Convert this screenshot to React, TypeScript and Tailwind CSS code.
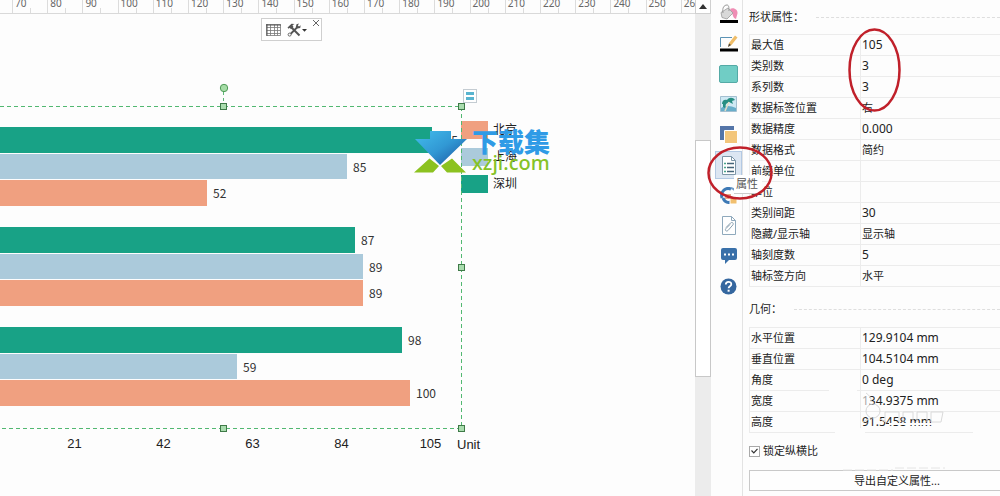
import React from "react";

const SANS = "font-['Noto_Sans','Noto_Sans_CJK_SC',sans-serif]";

const rulerMarks = [70, 80, 90, 100, 110, 120, 130, 140, 150, 160, 170, 180, 190, 200, 210, 220, 230, 240, 250, 260];

type Bar = { value: number; width: number; color: string };
const GREEN = "bg-[#18a286]";
const BLUE = "bg-[#abcadb]";
const ORANGE = "bg-[#f0a080]";
const groups: Bar[][] = [
  [
    { value: 105, width: 432, color: GREEN },
    { value: 85, width: 347, color: BLUE },
    { value: 52, width: 207, color: ORANGE },
  ],
  [
    { value: 87, width: 355, color: GREEN },
    { value: 89, width: 363, color: BLUE },
    { value: 89, width: 363, color: ORANGE },
  ],
  [
    { value: 98, width: 402, color: GREEN },
    { value: 59, width: 237, color: BLUE },
    { value: 100, width: 410, color: ORANGE },
  ],
];

const legend = [
  { name: "北京", color: ORANGE },
  { name: "上海", color: BLUE },
  { name: "深圳", color: GREEN },
];

const shapeRows: [string, string][] = [
  ["最大值", "105"],
  ["类别数", "3"],
  ["系列数", "3"],
  ["数据标签位置", "右"],
  ["数据精度", "0.000"],
  ["数据格式", "简约"],
  ["前缀单位", ""],
  ["单位", ""],
  ["类别间距", "30"],
  ["隐藏/显示轴", "显示轴"],
  ["轴刻度数", "5"],
  ["轴标签方向", "水平"],
];

const geometryRows: [string, string][] = [
  ["水平位置", "129.9104 mm"],
  ["垂直位置", "104.5104 mm"],
  ["角度", "0 deg"],
  ["宽度", "134.9375 mm"],
  ["高度", "91.5458 mm"],
];

function Ruler() {
  return (
    <div className="h-[14px] shrink-0 overflow-hidden border-b border-[#d9d9d9] bg-[#fdfdfd] pl-3">
      <div className="grid h-full w-[704px] grid-cols-20">
        {rulerMarks.map((m) => (
          <div key={m} className="relative flex border-l border-[#dcdcdc]">
            <span className="-mt-[3px] pl-[2px] text-[10px] leading-3 text-[#666]">{m}</span>
            <span className="absolute bottom-0 left-1/2 h-[5px] w-px bg-[#dcdcdc]" />
          </div>
        ))}
      </div>
    </div>
  );
}

function Handle({ className }: { className: string }) {
  return <span className={`absolute size-[7px] border border-[#3f7a48] bg-[#a9dcae] ${className}`} />;
}

function Selection() {
  return (
    <div className="pointer-events-none absolute top-[92px] left-0 h-[323px] w-[462px]">
      <svg className="absolute inset-0 size-full" aria-hidden="true">
        <path
          d="M0 .5H461M461.500 1V322M461 322.500H0"
          fill="none"
          stroke="#52b871"
          strokeDasharray="4 3"
        />
      </svg>
      <svg className="absolute -top-[23px] left-[219px] h-[22px] w-[10px]" viewBox="0 0 10 22" aria-hidden="true">
        <path d="M4.500 9V22" stroke="#5fb877" strokeDasharray="3 3" />
        <circle cx="5" cy="5" r="3.700" fill="#a5dca6" stroke="#4f9a57" />
      </svg>
      <Handle className="-top-[3px] left-[220px]" />
      <Handle className="-top-[3px] -right-[3px]" />
      <Handle className="top-[158px] -right-[3px]" />
      <Handle className="-bottom-[3px] left-[220px]" />
      <Handle className="-right-[3px] -bottom-[3px]" />
    </div>
  );
}

function FloatingTools() {
  return (
    <div className="absolute top-1 left-[261px] flex h-[23px] w-[61px] items-center border border-[#cfcfcf] bg-white pl-1">
      <button type="button" aria-label="数据表">
        <svg width="15" height="12" viewBox="0 0 15 12" fill="none" stroke="#777">
          <path d="M.5 .5h14v11H.5zM.5 3.500h14M.5 6.500h14M.5 9.500h14M4.500 .5v11M8.500 .5v11M11.500 .5v11" strokeWidth=".8" />
          <path d="M0 1h15M1 0v12" stroke="#555" />
        </svg>
      </button>
      <button type="button" aria-label="工具" className="ml-1.5">
        <svg width="22" height="14" viewBox="0 0 22 14">
          <path d="M4 4 12.500 12.500" stroke="#555" strokeWidth="2" />
          <path d="M.5 4.500 4.500 .8 7.500 1 5.500 2.200 6.500 4 4 6.200 2.800 4.800 1.600 5.800z" fill="#555" />
          <path d="M10.500 4 3 11.500" stroke="#555" strokeWidth="1.800" />
          <path d="M9.500 1.200 12 .6 10.800 2.600 12 3.600 13.700 2.200 13.200 5 10.500 5.600 8.800 4z" fill="#555" />
          <circle cx="2.600" cy="11.600" r="1.500" fill="white" stroke="#666" />
          <path d="M15 6h5l-2.500 2.800z" fill="#333" />
        </svg>
      </button>
      <button type="button" aria-label="关闭" className="absolute top-0 right-px">
        <svg width="8" height="8" viewBox="0 0 8 8" stroke="#666">
          <path d="M1 1l6 6M7 1l-6 6" />
        </svg>
      </button>
    </div>
  );
}

function Watermark() {
  return (
    <div className="absolute top-[111px] left-[413px] flex">
      <svg width="54" height="50" viewBox="0 0 54 50" aria-hidden="true">
        <defs>
          <linearGradient id="arrow" x1="0" y1="0" x2="1" y2="1">
            <stop offset="0" stopColor="#43bdec" />
            <stop offset=".5" stopColor="#3198d4" />
            <stop offset="1" stopColor="#1a4f9c" />
          </linearGradient>
        </defs>
        <path d="M17 6H38V14H54L27 40 2 14H17z" fill="url(#arrow)" />
        <path d="M16.500 33.500 26 41 20 47.500H1zM39 33.500 53 47.500H34L28 41z" fill="#8cc220" />
      </svg>
      <div className="pt-1 pl-[5px]">
        <div className="text-[26px] leading-[26px] font-black text-[#2f9be6]">下载集</div>
        <div className="text-[20px] leading-4 font-medium text-[#85c226]">xzji.com</div>
      </div>
    </div>
  );
}

function Chart() {
  return (
    <main className="relative min-w-0 flex-1 overflow-hidden">
      <section className="flex pt-[113px]" aria-label="图表">
        <div className="w-[461px] shrink-0">
          <div className="flex flex-col gap-[21px]">
            {groups.map((bars, i) => (
              <div key={i} className="flex h-[79px] flex-col gap-px">
                {bars.map((b, j) => (
                  <div key={j} className="flex min-h-0 flex-1 items-center gap-1.5">
                    <div className={`h-full shrink-0 ${b.color}`} style={{ width: b.width }} />
                    <span className="font-['Noto_Sans_CJK_SC',sans-serif] text-xs leading-4 text-[#333]">{b.value}</span>
                  </div>
                ))}
              </div>
            ))}
          </div>
        </div>
        <ul className="-mt-1.5 flex flex-col gap-[9px]">
          {legend.map((l) => (
            <li key={l.name} className="flex h-[18px] items-center gap-[5px]">
              <span className={`h-[18px] w-[27px] ${l.color}`} />
              <span className="text-xs leading-[18px] text-[#222]">{l.name}</span>
            </li>
          ))}
        </ul>
      </section>
      <div className="mt-[30px] flex pl-[30px] font-['Liberation_Sans',sans-serif] text-[13px] leading-4 text-[#222]">
        {[21, 42, 63, 84, 105].map((t) => (
          <span key={t} className="w-[89px] text-center">{t}</span>
        ))}
        <span className="-ml-[18px] pt-px">Unit</span>
      </div>
      <Selection />
      <button type="button" aria-label="选项" className="absolute top-[75px] left-[463px] grid h-[14px] w-[14px] place-items-center border border-[#c4ccd2] bg-white">
        <svg width="8" height="8" viewBox="0 0 8 8">
          <path d="M0 1.500h8M0 6.500h8" stroke="#58b4cf" strokeWidth="3" />
        </svg>
      </button>
      <FloatingTools />
      <Watermark />
    </main>
  );
}

function Rail() {
  return (
    <nav className="w-8 shrink-0 border-r border-[#e3e3e3] bg-[#fdfdfd]">
      <div className="-mt-0.5 ml-1 grid h-[304px] grid-rows-10 place-items-center">
        <button type="button" aria-label="填充">
          <svg width="18" height="19" viewBox="0 0 18 19">
            <path d="M10 5c4-2 8 1 7.500 4.500L16 15c-3-1-3-4-4-6z" fill="#ef8db4" />
            <path d="M1 8.500 8 4l5 5-6 6-5-1.500z" fill="#d9d9d9" stroke="#9a9a9a" strokeWidth=".8" />
            <path d="M3 9c-1-5 1-8 4-8 2 0 2 3 2 6" fill="none" stroke="#999" />
            <path d="M0 16h18v3H0z" fill="#000" />
          </svg>
        </button>
        <button type="button" aria-label="线条">
          <svg width="18" height="17" viewBox="0 0 18 17">
            <path d="M.5 12V2.500H12" fill="none" stroke="#5b93b5" />
            <path d="M8 12l1-4 6-7.500 2.500 2L11.500 10z" fill="#efbd68" />
            <path d="M8 12l1-3.500 2 1.500z" fill="#444" />
            <path d="M0 13.500h18v3H0z" fill="#000" />
          </svg>
        </button>
        <button type="button" aria-label="主题颜色" className="h-[18px] w-[19px] rounded-xs border border-[#54aaa6] bg-[#70cdc5]" />
        <button type="button" aria-label="图片">
          <svg width="17" height="16" viewBox="0 0 17 16">
            <path d="M.5.5h16v15H.5z" fill="#cfe9f4" stroke="#a3bfd0" />
            <path d="M1 12c5-3 10-2 15 0v3H1z" fill="#68aeca" />
            <path d="M2 8c0-4 3-5 5-4 2-3 6-3 8 0l-3 1 1 3-4-2-3 2-1 4-2-1 0-3z" fill="#278e82" />
            <path d="M9 6l-4 9" stroke="#e5ddc3" strokeWidth="1.500" />
          </svg>
        </button>
        <button type="button" aria-label="图层">
          <svg width="18" height="18" viewBox="0 0 18 18">
            <path d="M0 0h14v14H0z" fill="#5475a8" />
            <path d="M4.500 4.500h13v13h-13z" fill="#f3c67b" stroke="#fff" />
          </svg>
        </button>
        <button type="button" aria-label="属性" className="flex h-[28px] w-[27px] items-center justify-center border border-[#b3c9e3] bg-[#dce6f2]">
          <svg width="14" height="19" viewBox="0 0 14 19">
            <path d="M.5.5h9l4 4v14H.5z" fill="#fff" stroke="#7d96a8" />
            <path d="M9.500.5v4h4" fill="none" stroke="#7d96a8" />
            <path d="M5 7.500h7M5 11.500h7M5 15.500h7" stroke="#456579" strokeWidth="1.500" />
            <path d="M2 7.500h2M2 11.500h2M2 15.500h2" stroke="#4aa78c" strokeWidth="1.500" />
          </svg>
        </button>
        <button type="button" aria-label="超链接">
          <svg width="18" height="18" viewBox="0 0 18 18">
            <path d="M2 11C0 4 6 0 11 2" fill="none" stroke="#3d79b5" strokeWidth="3" />
            <path d="M3 11c2 5 5 5 8 4" fill="none" stroke="#3d79b5" strokeWidth="3" />
            <path d="M11 1c4 1 5 4 5 6" fill="none" stroke="#6f9cc9" strokeWidth="2" />
            <path d="M5 7h6v5H5z" fill="#e9a88a" />
            <path d="M10 10h7v7h-7z" fill="#f1bf6f" stroke="#fff" />
          </svg>
        </button>
        <button type="button" aria-label="附件">
          <svg width="14" height="19" viewBox="0 0 14 19" fill="none">
            <path d="M.5.5h9l4 4v14H.5z" fill="#fff" stroke="#8fa9bc" />
            <path d="M9.500.5v4h4" stroke="#8fa9bc" />
            <path d="M4 11.500 8.500 7c2-1.500 3.500.5 2.300 2L6 14.500c-2 1.500-3.500-.5-2-2L8 8.500" stroke="#8aa0b0" />
          </svg>
        </button>
        <button type="button" aria-label="注释">
          <svg width="16" height="16" viewBox="0 0 16 16">
            <path d="M2 0h12q2 0 2 2v8q0 2-2 2H8l-4 4v-4H2q-2 0-2-2V2q0-2 2-2z" fill="#3970a9" />
            <path d="M3 5.500h2v2H3zM7 5.500h2v2H7zM11 5.500h2v2h-2z" fill="#fff" />
          </svg>
        </button>
        <button type="button" aria-label="帮助">
          <svg width="17" height="17" viewBox="0 0 17 17">
            <circle cx="8.500" cy="8.500" r="8" fill="#35679f" />
            <path d="M5.800 6.500c0-3.600 5.600-3.500 5.500-.3 0 2-2.700 2-2.700 4" fill="none" stroke="#fff" strokeWidth="1.800" />
            <path d="M7.600 11.700h2v2h-2z" fill="#fff" />
          </svg>
        </button>
      </div>
    </nav>
  );
}

function SectionTitle({ children }: { children: string }) {
  return (
    <h2 className="flex h-[18px] items-center gap-3 text-[11px] leading-[18px] text-[#222]">
      {children}
      <span className="flex-1 border-t border-dashed border-[#dedede]" />
    </h2>
  );
}

function PropertyTable({ rows, label }: { rows: [string, string][]; label: string }) {
  return (
    <table aria-label={label} className="w-full table-fixed border-collapse border border-r-0 border-[#ececec] text-[11px] leading-5 text-[#222]">
      <tbody>
        {rows.map(([k, v]) => (
          <tr key={k} className="h-[21px] border-b border-[#ececec]">
            <th scope="row" className="w-[111px] border-r border-[#ececec] p-0 pl-px text-left font-normal">{k}</th>
            <td className={/\d/.test(v) ? "p-0 pl-px text-xs leading-5" : "p-0 pl-px"}>{v}</td>
          </tr>
        ))}
      </tbody>
    </table>
  );
}

function Panel() {
  return (
    <aside className="relative w-[257px] shrink-0 bg-[#fdfdfd] pt-2 pl-1.5">
      <SectionTitle>形状属性：</SectionTitle>
      <div className="pt-2">
        <PropertyTable rows={shapeRows} label="形状属性" />
      </div>
      <div className="pt-[13px]">
        <SectionTitle>几何：</SectionTitle>
      </div>
      <div className="pt-[9px]">
        <PropertyTable rows={geometryRows} label="几何" />
      </div>
      <label className="flex items-center gap-[3px] pt-[9px] text-[11px] leading-[18px] text-[#222]">
        <input type="checkbox" defaultChecked className="peer sr-only" />
        <span className="grid size-[11px] place-items-center border border-[#aaa] bg-white">
          <svg width="7" height="6" viewBox="0 0 7 6" fill="none" stroke="#333">
            <path d="M.5 2.500 2.800 4.800 6.500.8" strokeWidth="1.200" />
          </svg>
        </span>
        锁定纵横比
      </label>
      <button type="button" className="mt-2.5 h-[21px] w-[296px] border border-[#c9c9c9] bg-[#fefefe] text-center text-[11px] leading-[18px] text-[#222]">
        导出自定义属性...
      </button>
      <svg className="pointer-events-none absolute top-[384px] left-[80px]" width="177" height="90" viewBox="0 0 177 90" fill="none" aria-hidden="true">
        <path d="M6 3h28v4H6zM2 24h28v3H2zM150 42h27v10h-27zM12 44h30v7H12z" fill="#fdfdfd" />
        <path d="M38 7h8v15h-8z" fill="#fdfdfd" fillOpacity=".6" />
        <circle cx="50" cy="27" r="7" stroke="#d8d8d8" />
        <path d="M43 9q6 4 5 9M57 35l6 3M62 38V28h14v10M80 38V28h10v10M94 38V28h10v10M108 38V28h12l-2 10zM40 38l6-3" stroke="#dadada" />
        <path d="M66 40h56" stroke="#fdfdfd" strokeWidth="2" />
        <path d="M20 86h50M72 84h50" stroke="#e4e4e4" strokeDasharray="9 3" />
      </svg>
    </aside>
  );
}

export default function App() {
  return (
    <div className={`relative flex min-h-screen overflow-hidden bg-[#fdfdfd] text-black ${SANS}`}>
      <div className="flex min-w-0 flex-1 flex-col">
        <Ruler />
        <Chart />
      </div>
      <div className="flex w-4 shrink-0 flex-col bg-[#ececec]">
        <button type="button" aria-label="向上滚动" className="grid h-[14px] place-items-center border border-t-0 border-[#d0d0d0] bg-white">
          <svg width="8" height="5" viewBox="0 0 8 5"><path d="M0 5 4 0 8 5z" fill="#333" /></svg>
        </button>
        <div className="mt-[126px] h-[237px] border border-[#c8c8c8] bg-white" />
        <div className="flex-1 bg-[#ececec]" />
      </div>
      <Rail />
      <Panel />
      <div role="tooltip" className="absolute top-[175px] right-[238px] border-b border-[#ccc] bg-white pr-1 pl-0.5 text-[11px] leading-[18px] text-[#555]">属性</div>
      <svg className="pointer-events-none absolute top-0 right-0" width="300" height="220" viewBox="0 0 300 220" fill="none" stroke="#c0202a" strokeWidth="2.500" aria-hidden="true">
        <ellipse cx="174.500" cy="70" rx="25" ry="40.500" />
        <ellipse cx="40" cy="173" rx="31.500" ry="25.500" />
      </svg>
    </div>
  );
}
